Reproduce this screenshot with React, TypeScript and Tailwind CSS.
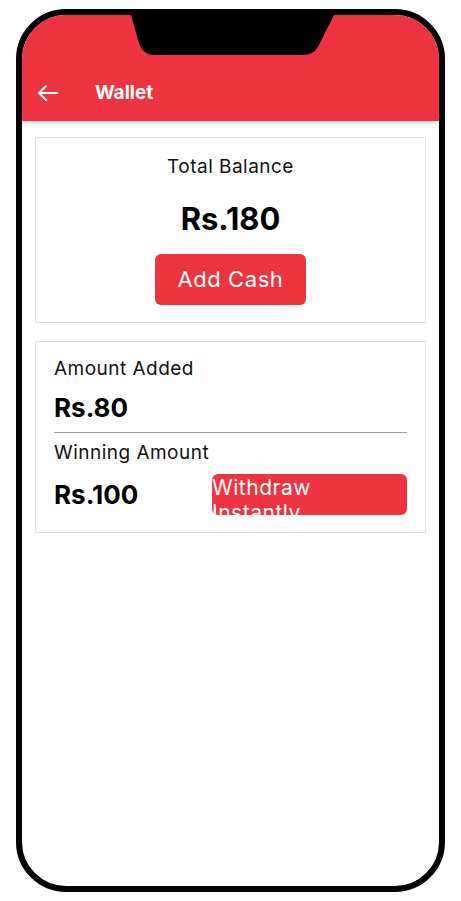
import React from 'react';

const font = { fontFamily: 'Inter, "Noto Sans", sans-serif' };

function BackArrow() {
  return (
    <svg width="20" height="16" viewBox="0 0 20 16" fill="none" stroke="white" strokeWidth="2" strokeLinecap="round" strokeLinejoin="round">
      <path d="M19 8H1" />
      <path d="M8 1L1 8l7 7" />
    </svg>
  );
}

function Notch() {
  return (
    <svg className="absolute left-0 top-0 z-20" width="417" height="42" viewBox="0 0 417 42">
      <path d="M109 0 L116 25 Q120 40 132 40 L281 40 Q291 40 296 32 L312 0 Z" fill="black" />
    </svg>
  );
}

export default function App() {
  return (
    <div className="w-[461px] h-[901px] bg-white pt-[9px] pl-[16px]" style={font}>
      {/* corpo do telefone */}
      <div className="relative w-[429px] h-[883px] border-[6px] border-black rounded-[50px] overflow-hidden bg-white">
        <Notch />

        {/* cabeçalho */}
        <div className="relative z-10 h-[106px] bg-[#ef3441] flex flex-col justify-end shadow-[0_2px_4px_rgba(0,0,0,0.18)]">
          <div className="h-[56px] flex items-center pl-[16px]">
            <BackArrow />
            <span className="ml-[37px] text-white text-[19px] font-bold">Wallet</span>
          </div>
        </div>

        <div className="px-[13px] pt-[16px] flex flex-col gap-[18px]">
          {/* saldo total */}
          <div className="border border-[#e2e2e2] pt-[17px] pb-[17px] flex flex-col items-center">
            <div className="text-[19px] leading-[24px] tracking-wide text-[#111]">Total Balance</div>
            <div className="mt-[21px] text-[31px] leading-[38px] font-bold text-black">Rs.180</div>
            <button className="mt-[16px] w-[151px] h-[51px] rounded-[6px] bg-[#ef3441] text-white text-[22px] tracking-wide">
              Add Cash
            </button>
          </div>

          {/* detalhes */}
          <div className="border border-[#e2e2e2] pt-[15px] pb-[17px] px-[18px] flex flex-col">
            <div className="text-[19px] leading-[24px] tracking-wide text-[#111]">Amount Added</div>
            <div className="mt-[10px] text-[26px] leading-[33px] font-bold text-black">Rs.80</div>
            <div className="mt-[8px] h-px bg-[#9a9a9a]" />
            <div className="mt-[8px] text-[19px] leading-[24px] tracking-wide text-[#111]">Winning Amount</div>
            <div className="mt-[9px] h-[41px] flex items-center justify-between">
              <span className="text-[26px] leading-[33px] font-bold text-black">Rs.100</span>
              <button className="w-[195px] h-[41px] rounded-[6px] bg-[#ef3441] text-white text-[21px] leading-[25px] text-left overflow-hidden self-start tracking-wide flex items-start">
                <span className="block w-[130px] pt-[1px]">Withdraw Instantly</span>
              </button>
            </div>
          </div>
        </div>
      </div>
    </div>
  );
}
